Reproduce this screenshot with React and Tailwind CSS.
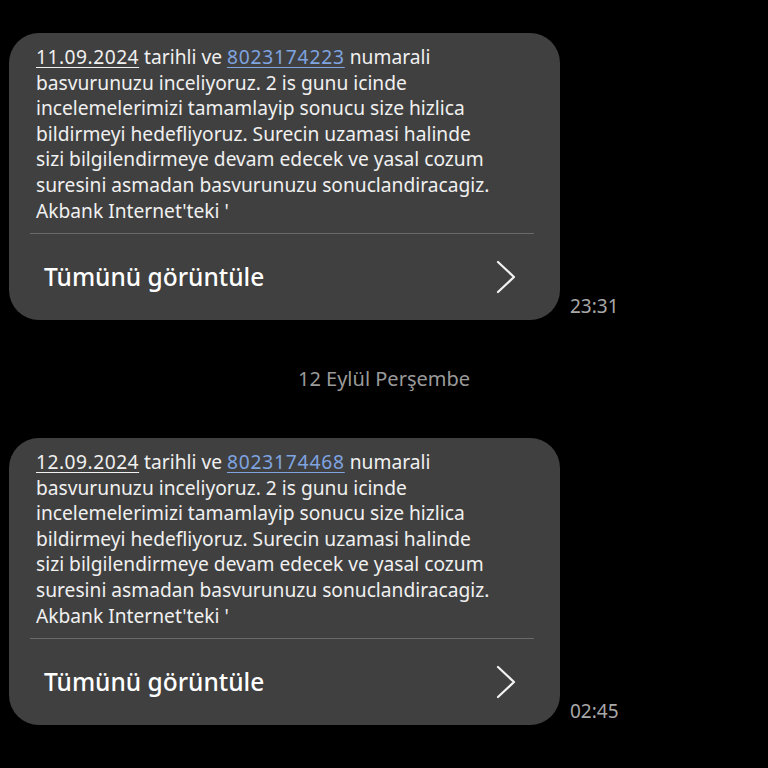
import React from 'react';

const lines = (date, num) => [
    <>
        <span className="underline decoration-1 underline-offset-[3px] tracking-[0.5px]">{date}</span> tarihli ve{' '}
        <span className="text-[#7fa4e0] underline decoration-1 underline-offset-[3px] tracking-[0.8px]">{num}</span> numarali
    </>,
    'basvurunuzu inceliyoruz. 2 is gunu icinde',
    'incelemelerimizi tamamlayip sonucu size hizlica',
    'bildirmeyi hedefliyoruz. Surecin uzamasi halinde',
    'sizi bilgilendirmeye devam edecek ve yasal cozum',
    'suresini asmadan basvurunuzu sonuclandiracagiz.',
    "Akbank Internet'teki '",
];

const Chevron = () => (
    <svg width="22" height="34" viewBox="0 0 22 34" fill="none">
        <path d="M2 2 L18 17 L2 32" stroke="#f2f2f2" strokeWidth="2.2" strokeLinecap="round" strokeLinejoin="round" />
    </svg>
);

const MessageBubble = ({ date, num, time }) => (
    <div className="flex items-end">
        <div className="w-[551px] h-[287px] bg-[#404040] rounded-[30px] flex flex-col">
            <div className="pl-[27px] pt-[11px] text-[19.2px] leading-[25.6px] text-[#f0f0f0]">
                {lines(date, num).map((l, i) => (
                    <div key={i}>{l}</div>
                ))}
            </div>
            <div className="ml-[21px] mr-[26px] mt-[10px] h-px bg-[#6a6a6a]" />
            <div className="flex-1 flex items-center justify-between pl-[35px] pr-[42px]">
                <span className="text-[24.5px] font-medium text-white">Tümünü görüntüle</span>
                <Chevron />
            </div>
        </div>
        <div className="ml-[10px] text-[19px] text-[#a8a8a8]">{time}</div>
    </div>
);

export default function App() {
    return (
        <div className="w-[768px] h-[768px] bg-black overflow-hidden font-['Noto_Sans',sans-serif] pl-[9px] pt-[33px]">
            <MessageBubble date="11.09.2024" num="8023174223" time="23:31" />
            <div className="w-[750px] h-[118px] flex items-center justify-center text-[20px] text-[#9a9a9a]">
                12 Eylül Perşembe
            </div>
            <MessageBubble date="12.09.2024" num="8023174468" time="02:45" />
        </div>
    );
}
